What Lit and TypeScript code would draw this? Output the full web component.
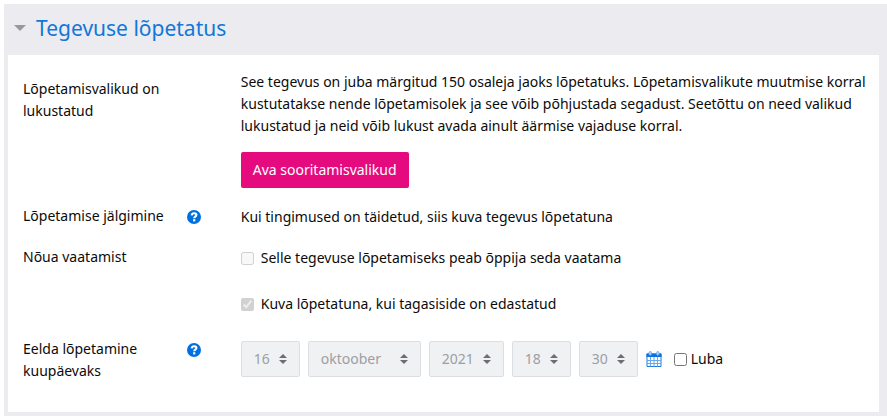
import { LitElement, html, css, svg } from "lit";
import { customElement, property } from "lit/decorators.js";

@customElement("help-button")
class HelpButton extends LitElement {
  @property() label = "";

  static styles = css`
    :host {
      display: block;
      width: 14px;
      height: 14px;
    }
    .help {
      display: block;
      width: 14px;
      height: 14px;
      padding: 0;
      border: 0;
      background: none;
      cursor: pointer;
    }
    .icon {
      display: block;
      width: 14px;
      height: 14px;
    }
  `;

  render() {
    return html`<button class="help" type="button" aria-label=${this.label}>
      <svg class="icon" viewBox="0 0 14 14" aria-hidden="true">
        <circle cx="7" cy="7" r="7" fill="#0070e0" />
        <path
          d="M4.7 5.4C4.9 3.9 5.8 3.3 7.1 3.3c1.4 0 2.3.7 2.3 1.8 0 1.5-2.2 1.6-2.2 3.1"
          fill="none"
          stroke="#fff"
          stroke-width="2.1"
        />
        <rect x="6.1" y="9.2" width="2.2" height="2.2" fill="#fff" />
      </svg>
    </button>`;
  }
}

interface DatePart {
  label: string;
  value: string;
  size: string;
}

const DATE_PARTS: DatePart[] = [
  { label: "Päev", value: "16", size: "short" },
  { label: "Kuu", value: "oktoober", size: "long" },
  { label: "Aasta", value: "2021", size: "medium" },
  { label: "Tund", value: "18", size: "short" },
  { label: "Minut", value: "30", size: "short" },
];

@customElement("app-root")
class AppRoot extends LitElement {
  static styles = css`
    :host {
      display: block;
      padding: 4px 0 0 4px;
      background: #fff;
      color: #0b0b0b;
      font: 14px/22px "Noto Sans", "Open Sans", sans-serif;
    }
    * {
      box-sizing: border-box;
    }
    .section {
      padding: 0 8px 4px 4px;
      background: #ebebf0;
    }
    .title {
      display: flex;
      align-items: center;
      height: 51px;
      margin: 0;
      font-size: 21px;
      line-height: 32px;
      font-weight: 400;
    }
    .toggle {
      display: flex;
      align-items: center;
      gap: 10px;
      padding: 0 0 4px 6px;
      color: #1177d9;
      text-decoration: none;
    }
    .caret {
      width: 12px;
      height: 6px;
      flex: none;
    }
    .body {
      display: flex;
      flex-direction: column;
      gap: 10px;
      padding: 16px 0 30px;
      background: #fff;
    }
    .row {
      display: grid;
      grid-template-columns: 25% 1fr;
      min-height: 31px;
    }
    .row.tall {
      min-height: 36px;
    }
    .name {
      display: flex;
      justify-content: space-between;
      gap: 8px;
      padding: 7px 25px 0 15px;
    }
    .name help-button {
      flex: none;
      margin-top: 5px;
    }
    .caption {
      max-width: 150px;
    }
    .value {
      padding: 8px 8px 0 15px;
    }
    .value.first {
      padding-top: 0;
    }
    .value.date {
      padding-top: 10px;
    }
    .text {
      margin: 0;
    }
    .unlock {
      height: 36px;
      margin: 15px 0 0;
      padding: 0 12px;
      border: 0;
      border-radius: 2px;
      background: #e50b7f;
      color: #fff;
      font: inherit;
      cursor: pointer;
    }
    .check {
      display: flex;
      align-items: center;
      gap: 7px;
    }
    .check.tight {
      gap: 4px;
    }
    .box {
      width: 13px;
      height: 13px;
      margin: 0;
      flex: none;
    }
    .controls {
      display: flex;
      flex-wrap: wrap;
      align-items: center;
      gap: 8px;
    }
    .picker {
      position: relative;
    }
    .select {
      display: block;
      width: 100%;
      height: 36px;
      padding: 0 0 0 12px;
      border: 1px solid #dbdfe4;
      border-radius: 2px;
      background: #f0f1f3;
      color: #9b9fa4;
      font: inherit;
      opacity: 1;
      appearance: none;
    }
    .short {
      width: 59px;
    }
    .medium {
      width: 75px;
    }
    .long {
      width: 113px;
    }
    .arrows {
      position: absolute;
      right: 13px;
      top: 13px;
      width: 8px;
      height: 10px;
      pointer-events: none;
    }
    .calendar {
      display: block;
      margin: 0 4px 0 0;
    }
    .calendar svg {
      display: block;
      width: 16px;
      height: 17px;
    }
  `;

  private datePart(part: DatePart) {
    return html`<div class="picker ${part.size}">
      <select class="select" aria-label=${part.label} disabled>
        <option selected>${part.value}</option>
      </select>
      <svg class="arrows" viewBox="0 0 8 10" aria-hidden="true">
        <path d="M0 4L4 0l4 4zM0 6h8l-4 4z" fill="#6b6e73" />
      </svg>
    </div>`;
  }

  private calendarIcon() {
    return html`<svg viewBox="0 0 16 17" aria-hidden="true">
      <path d="M1 3h14v12.5H1z" fill="#fff" stroke="#1a7ae0" />
      <path d="M.5 2.5h15V6H.5z" fill="#0d72df" />
      ${[4.5, 8, 11.5].map(
        (x) => svg`<path d="M${x} 6v9.5" stroke="#6ba8ea" stroke-width="1" />`,
      )}
      ${[9.5, 12.5].map(
        (y) => svg`<path d="M1 ${y}h14" stroke="#6ba8ea" stroke-width="1" />`,
      )}
      <rect x="3" y=".5" width="2.4" height="3.8" rx="1.2" fill="#b9d8fa" stroke="#5fa3ee" stroke-width=".8" />
      <rect x="10.6" y=".5" width="2.4" height="3.8" rx="1.2" fill="#b9d8fa" stroke="#5fa3ee" stroke-width=".8" />
    </svg>`;
  }

  render() {
    return html`<section class="section">
      <h3 class="title">
        <a class="toggle" href="#completion" aria-expanded="true">
          <svg class="caret" viewBox="0 0 12 6" aria-hidden="true">
            <path d="M0 0h12L6 6z" fill="#999" />
          </svg>
          Tegevuse lõpetatus
        </a>
      </h3>
      <div class="body" id="completion">
        <div class="row">
          <div class="name"><span class="caption">Lõpetamisvalikud on lukustatud</span></div>
          <div class="value first">
            <p class="text">
              See tegevus on juba märgitud 150 osaleja jaoks lõpetatuks. Lõpetamisvalikute
              muutmise korral kustutatakse nende lõpetamisolek ja see võib põhjustada segadust.
              Seetõttu on need valikud lukustatud ja neid võib lukust avada ainult äärmise
              vajaduse korral.
            </p>
            <button class="unlock" type="button">Ava sooritamisvalikud</button>
          </div>
        </div>
        <div class="row">
          <div class="name">
            <span class="caption">Lõpetamise jälgimine</span>
            <help-button label="Abi: Lõpetamise jälgimine"></help-button>
          </div>
          <div class="value">Kui tingimused on täidetud, siis kuva tegevus lõpetatuna</div>
        </div>
        <div class="row tall">
          <div class="name"><span class="caption">Nõua vaatamist</span></div>
          <div class="value">
            <label class="check">
              <input class="box" type="checkbox" disabled />
              Selle tegevuse lõpetamiseks peab õppija seda vaatama
            </label>
          </div>
        </div>
        <div class="row tall">
          <div class="name"></div>
          <div class="value">
            <label class="check">
              <input class="box" type="checkbox" checked disabled />
              Kuva lõpetatuna, kui tagasiside on edastatud
            </label>
          </div>
        </div>
        <div class="row">
          <div class="name">
            <span class="caption">Eelda lõpetamine kuupäevaks</span>
            <help-button label="Abi: Eelda lõpetamine kuupäevaks"></help-button>
          </div>
          <div class="value date">
            <div class="controls">
              ${DATE_PARTS.map((part) => this.datePart(part))}
              <a class="calendar" href="#calendar" aria-label="Kalender">${this.calendarIcon()}</a>
              <label class="check tight">
                <input class="box" type="checkbox" />
                Luba
              </label>
            </div>
          </div>
        </div>
      </div>
    </section>`;
  }
}
